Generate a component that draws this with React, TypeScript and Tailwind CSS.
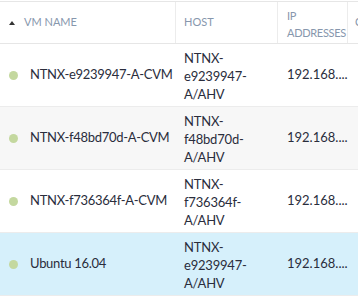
import React from 'react';

type Vm = { name: string; host: string[]; ip: string; tone: 'white' | 'gray' | 'blue' };

const vms: Vm[] = [
  { name: 'NTNX-e9239947-A-CVM', host: ['NTNX-', 'e9239947-', 'A/AHV'], ip: '192.168....', tone: 'white' },
  { name: 'NTNX-f48bd70d-A-CVM', host: ['NTNX-', 'f48bd70d-', 'A/AHV'], ip: '192.168....', tone: 'gray' },
  { name: 'NTNX-f736364f-A-CVM', host: ['NTNX-', 'f736364f-', 'A/AHV'], ip: '192.168....', tone: 'white' },
  { name: 'Ubuntu 16.04', host: ['NTNX-', 'e9239947-', 'A/AHV'], ip: '192.168....', tone: 'blue' },
];

const rowBg = {
  white: 'bg-white',
  gray: 'bg-[#f7f7f7]',
  blue: 'bg-[#d6f0fb]',
};

const cols = 'grid grid-cols-[176px_102px_70px_1fr]';

const App = () => {
  return (
    <div className="w-[358px] h-[298px] overflow-hidden bg-white font-['Lato',sans-serif]">
      {/* header */}
      <div className={`${cols} mt-px h-[43px] border-y border-[#e6e6e6] text-[11px] text-[#8797ad] uppercase`}>
        <div className="flex items-center pl-[9px] border-r border-[#ececec]">
          <svg width="6" height="4" viewBox="0 0 6 4" className="mr-[9px]">
            <path d="M0 4 L3 0 L6 4 Z" fill="#333" />
          </svg>
          VM Name
        </div>
        <div className="flex items-center pl-[8px] border-r border-[#ececec]">Host</div>
        <div className="flex items-center pl-[9px] pt-[2px] leading-[17px] tracking-[-0.3px] border-r border-[#ececec] whitespace-nowrap">
          IP<br />Addresses
        </div>
        <div className="flex items-center pl-[7px] overflow-hidden">Cl</div>
      </div>

      {/* rows */}
      {vms.map((vm, i) => (
        <div
          key={i}
          className={`${cols} h-[63px] border-b border-[#ececec] text-[13px] text-[#2a2d3c] ${rowBg[vm.tone]}`}
        >
          <div className="flex items-center pl-[9px] whitespace-nowrap tracking-[-0.3px]">
            <span className="w-[9px] h-[9px] shrink-0 rounded-full bg-[#c4d89f] mr-[12px]" />
            {vm.name}
          </div>
          <div className="flex flex-col justify-center pl-[8px] pt-[2px] leading-[18px] tracking-[-0.2px]">
            {vm.host.map((h) => (
              <span key={h}>{h}</span>
            ))}
          </div>
          <div className="flex items-center pl-[9px] whitespace-nowrap">{vm.ip}</div>
          <div />
        </div>
      ))}
    </div>
  );
};

export default App;
